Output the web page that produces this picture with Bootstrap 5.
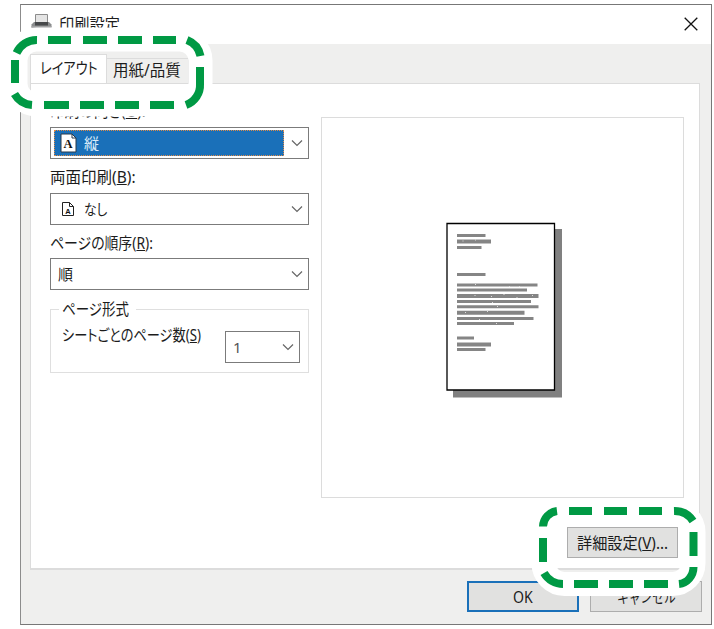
<!DOCTYPE html>
<html lang="ja">
<head>
<meta charset="utf-8">
<title>印刷設定</title>
<link rel="stylesheet" href="https://cdn.jsdelivr.net/npm/bootstrap@5.3.0/dist/css/bootstrap.min.css">
<style>
body{width:714px;height:629px;overflow:hidden;background:#fff;color:#1c1c1c;font:15.5px/22px "Noto Sans","Noto Sans CJK JP",sans-serif;font-feature-settings:"palt"}
.window{width:692px;height:621px;margin:4px 0 0 20px;background:#efefee;border:1px solid #777;border-left-color:#8c8c8c}
.titlebar{height:39px;padding:0 13px 2px 10px}
.t{display:inline-block;white-space:nowrap;transform-origin:0 50%}
.tabs{height:39px;padding-left:9px}
.tab-on{width:77px;height:29px;background:#fff;border:1px solid #dcdcdc;border-bottom:0;padding:2px 0 0 9px}
.tab-off{width:82px;height:25px;border:1px solid #dcdcdc;border-left:0;border-bottom:0;padding:0 0 0 6px}
.panel{width:670px;height:487px;margin-left:9px;background:#fff;border:1px solid #dcdcdc;border-bottom-width:2px;padding:20px 16px 0 20px}
.form-side{width:259px;margin-left:-1px}
.caption{height:34px;padding-top:7px}
.caption.first{height:23px;padding-top:0;line-height:14px}
.combo{height:32px;border:1px solid #7b7b7b;background:#fff;padding:2px 5px 2px 3px}
.combo .value{height:26px;width:230px;padding-left:6px;font-size:15px}
.combo .picked{background:#1a70b9;color:#dcecf9;outline:1px dotted #e08b47;outline-offset:-1px}
.group{height:64px;margin-top:19px;border:1px solid #dfdfdf;padding:0 8px 0 11px}
.group-title{margin-top:-12px;margin-left:-3px;padding:0 3px;width:77px;height:22px;background:#fff}
.combo.small-combo{width:75px;margin-top:11px}
.combo.small-combo .value{width:40px;padding-left:4px;color:#555}
.preview{width:363px;height:381px;margin-top:13px;margin-right:-1px;border:1px solid #dcdcdc}
.dlg{height:31px;width:112px;background:#e1e1e0;border:1px solid #adadad;border-radius:0;padding:0;font-size:15.5px;line-height:28px;color:#1c1c1c}
.dlg.main{border:2px solid #1a70b9;height:31px;line-height:24px}
.foot{height:50px;padding:11px 9px 0 0}
</style>
<script src="https://cdn.jsdelivr.net/npm/bootstrap@5.3.0/dist/js/bootstrap.bundle.min.js"></script>
</head>
<body class="position-relative">
<svg width="0" height="0" class="position-absolute"><defs>
<symbol id="chev" viewBox="0 0 12 8"><path d="M1 1.500 6 6.500 11 1.500" fill="none" stroke="#666" stroke-width="1.2"/></symbol>
</defs></svg>
<main class="window">
<header class="titlebar bg-white d-flex align-items-center">
<svg width="21" height="18" viewBox="0 0 21 18" style="margin-top:-2px"><path d="M4.500 9V.5h12V9" fill="#e4e4e4" stroke="#8b8b8b"/><path d="M3 8h15l2.500 2.500v3H.5v-3z" fill="#8b8d8e"/><path d="M4 8h13v3.500H4z" fill="#47494b"/><path d="M.5 12h20v4H.5z" fill="#a0a1a2"/><path d="M2 14.500h17v2H2z" fill="#c2c3c4"/></svg>
<span class="t" style="margin-left:7px" id="ti">印刷設定</span>
<svg class="ms-auto" width="14" height="14" viewBox="0 0 14 14"><path d="M.7.7 13.300 13.300M13.300.7.7 13.300" stroke="#111" stroke-width="1.3"/></svg>
</header>
<nav class="tabs d-flex align-items-end">
<div class="tab-on"><span class="t" id="t1">レイアウト</span></div>
<div class="tab-off"><span class="t" id="t2">用紙/品質</span></div>
</nav>
<section class="panel">
<div class="d-flex justify-content-between">
<div class="form-side">
<div class="caption first"><span class="t" id="t3">印刷の向き(<u>O</u>):</span></div>
<div class="combo d-flex align-items-center justify-content-between">
<div class="value picked d-flex align-items-center"><svg width="17" height="20" viewBox="0 0 17 20"><path d="M1 1h11l4 4v14H1z" fill="#fff" stroke="#26394a"/><path d="M12 1v4h4" fill="none" stroke="#26394a"/><text x="3.500" y="15" font-family="Liberation Serif" font-weight="bold" font-size="12.500" fill="#111">A</text></svg><span style="margin-left:7px">縦</span></div>
<svg width="12" height="8"><use href="#chev"/></svg></div>
<div class="caption"><span class="t" id="t4">両面印刷(<u>B</u>):</span></div>
<div class="combo d-flex align-items-center justify-content-between">
<div class="value d-flex align-items-center"><svg width="17" height="16" viewBox="0 0 17 16"><path d="M2.500 1.500h7l4 4v9h-11z" fill="#fff" stroke="#222"/><path d="M9.500 1.500v4h4" fill="none" stroke="#222"/><text x="5.200" y="12.500" font-family="Liberation Sans" font-weight="bold" font-size="7.500" fill="#111">A</text></svg><span class="t" style="margin-left:7px" id="t5">なし</span></div>
<svg width="12" height="8"><use href="#chev"/></svg></div>
<div class="caption" style="height:33px"><span class="t" id="t6">ページの順序(<u>R</u>):</span></div>
<div class="combo d-flex align-items-center justify-content-between">
<div class="value d-flex align-items-center ps-1">順</div>
<svg width="12" height="8"><use href="#chev"/></svg></div>
<div class="group"><div class="group-title"><span class="t" id="t7">ページ形式</span></div>
<div class="d-flex justify-content-between"><span class="t mt-1" id="t8">シートごとのページ数(<u>S</u>)</span>
<div class="combo small-combo d-flex align-items-center justify-content-between flex-shrink-0"><div class="value d-flex align-items-center">1</div><svg width="12" height="8"><use href="#chev"/></svg></div></div></div>
</div>
<div class="preview">
<svg class="d-block" width="361" height="379" viewBox="322 118 361 379"><path d="M453 229h109v168.500H453z" fill="#808080"/><path d="M447 223.500h107.500V390H447z" fill="#fff" stroke="#000" stroke-width="1.3"/>
<g stroke="#858585" stroke-width="3"><path d="M457 235.500h28.500M457 247.500h24.500M457 274.500h28.500M457 285h80.500M457 290h70M457 301.500h74M457 306.800h81.500M457 318.400h76.500M457 323.500h57M457 338h17M457 349.500h28.500"/><path stroke-width="4" d="M457 241.500h34M457 296h81.500M457 312.700h67.500M457 344.500h34"/></g>
<path d="M463 240.500v1M475.500 239.500v1M475.500 284v1M509.500 286v1M519.500 286v1M475 295v1M491.500 296v1M504 294v1M517 297v1M532.500 295v1M492.500 302v1M497.500 306v1M465.500 312v1M487.500 311v1M479.500 319v1M496.500 323v1" stroke="#ddd"/></svg>
</div></div>
<div class="d-flex justify-content-end pt-4"><button class="btn dlg" style="margin-top:5px;margin-right:5px;width:111px"><span class="t" id="t9">詳細設定(<u>V</u>)...</span></button></div>
</section>
<footer class="foot d-flex justify-content-end gap-2"><button class="btn dlg main"><span class="t" id="t10">OK</span></button><button class="btn dlg" style="margin-left:3px"><span class="t" id="t11">キャンセル</span></button></footer>
</main>
<svg class="position-absolute top-0 start-0" width="714" height="629" viewBox="0 0 714 629" fill="none">
<g stroke="#fff" stroke-width="24"><rect x="15.500" y="39.500" width="185" height="65" rx="21"/><rect x="543.500" y="511" width="150" height="73" rx="21"/></g>
<g stroke="#009944" stroke-width="8">
<path d="M16.500 53A22 22 0 0 1 37 40M48 40h23M83 40h24M118 40h24M153 40h23M187 40A22 22 0 0 1 200.500 56M200 67v17A21 21 0 0 1 186 105M174 105h-24M139 105h-24M104 105H80M69 105H44M32 105A22 22 0 0 1 14.500 94M15 83V60"/>
<path d="M543 526.500A16 16 0 0 1 557 511M569 511h23M604 511h23M639 511h23M674 511A22 22 0 0 1 693 521M693.500 532v24M693.500 567A16 17 0 0 1 679 584M668 584h-24M633 584h-24M598 584h-24M563 584A22 22 0 0 1 544 573M543 562v-24"/></g></svg>
<script>
// Condenses each label to the narrow UI lettering width
const widths={ti:61,t1:58,t2:68,t3:96,t4:86,t5:23,t6:103,t7:67,t8:139,t9:91,t10:20,t11:59};
function fit(){for(const [id,w] of Object.entries(widths)){const e=document.getElementById(id);const n=e.offsetWidth;e.style.transform=`scaleX(${w/n})`;e.style.marginRight=`${w-n}px`;}}
fit();
</script>
</body>
</html>
